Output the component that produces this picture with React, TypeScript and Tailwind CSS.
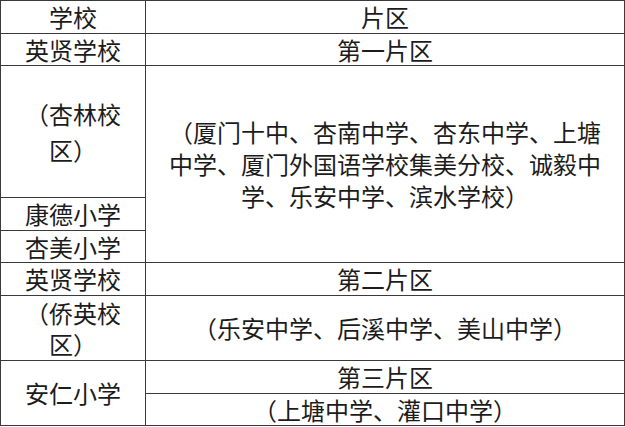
import React from 'react';

const cell = 'border border-[#3a3a3a] text-center align-middle p-0';

export default function App() {
  return (
    <div
      className="w-[625px] h-[427px] bg-white text-[#1c1c1c] text-[24px] leading-[26px]"
      style={{ fontFamily: '"Noto Sans CJK SC", "Noto Sans", sans-serif' }}
    >
      <table className="border-collapse table-fixed w-[624px]">
        <colgroup>
          <col className="w-[145px]" />
          <col className="w-[479px]" />
        </colgroup>
        <tbody>
          <tr className="h-[33px]">
            <td className={cell}>学校</td>
            <td className={cell}>片区</td>
          </tr>
          <tr className="h-[32px]">
            <td className={cell}>英贤学校</td>
            <td className={cell}>第一片区</td>
          </tr>
          <tr className="h-[132px]">
            <td className={`${cell} px-[14px] leading-[36px]`}>（杏林校区）</td>
            <td className={`${cell} px-4 leading-[32px]`} rowSpan={3}>
              （厦门十中、杏南中学、杏东中学、上塘中学、厦门外国语学校集美分校、诚毅中学、乐安中学、滨水学校）
            </td>
          </tr>
          <tr className="h-[33px]">
            <td className={cell}>康德小学</td>
          </tr>
          <tr className="h-[32px]">
            <td className={cell}>杏美小学</td>
          </tr>
          <tr className="h-[33px]">
            <td className={cell}>英贤学校</td>
            <td className={cell}>第二片区</td>
          </tr>
          <tr className="h-[65px]">
            <td className={`${cell} px-[14px] leading-[31px]`}>（侨英校区）</td>
            <td className={cell}>（乐安中学、后溪中学、美山中学）</td>
          </tr>
          <tr className="h-[33px]">
            <td className={cell} rowSpan={2}>安仁小学</td>
            <td className={cell}>第三片区</td>
          </tr>
          <tr className="h-[32px]">
            <td className={cell}>（上塘中学、灌口中学）</td>
          </tr>
        </tbody>
      </table>
    </div>
  );
}
